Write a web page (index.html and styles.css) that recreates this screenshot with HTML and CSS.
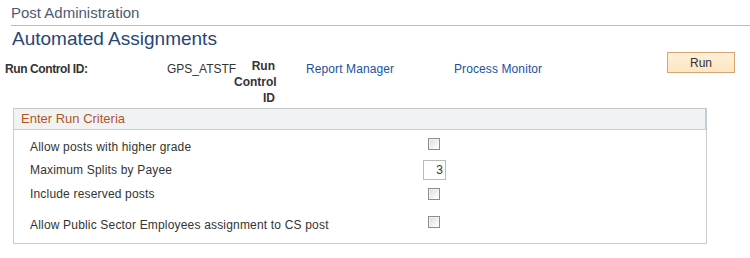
FILE: index.html
```html
<!DOCTYPE html>
<html lang="en">

<head>
    <meta charset="UTF-8">
    <meta name="viewport" content="width=device-width, initial-scale=1.0">
    <title>Automated Assignments</title>
    <link rel="stylesheet" href="styles.css">
</head>

<body>
    <div class="crumb">Post Administration</div>
    <h1 class="title">Automated Assignments</h1>

    <div class="runbar">
        <span class="rc-label">Run Control ID:</span>
        <span class="rc-value">GPS_ATSTF</span>
        <span class="rc-stack">Run<br>Control<br>ID</span>
        <a class="link link-rm" href="#">Report Manager</a>
        <a class="link link-pm" href="#">Process Monitor</a>
        <button class="run-btn" type="button">Run</button>
    </div>

    <div class="group">
        <div class="group-head">Enter Run Criteria</div>
        <div class="crit">
            <div class="row row-1">
                <span class="crit-label">Allow posts with higher grade</span>
                <input class="cb cb-up" type="checkbox">
            </div>
            <div class="row row-2">
                <span class="crit-label">Maximum Splits by Payee</span>
                <input class="num" type="text" value="3">
            </div>
            <div class="row row-3">
                <span class="crit-label">Include reserved posts</span>
                <input class="cb" type="checkbox">
            </div>
            <div class="row row-4">
                <span class="crit-label">Allow Public Sector Employees assignment to CS post</span>
                <input class="cb cb-up" type="checkbox">
            </div>
        </div>
    </div>
</body>

</html>
```

FILE: styles.css
```css
body {
    margin: 0;
    font-family: "Liberation Sans", Arial, sans-serif;
    font-size: 12px;
    color: #333;
    background: #fff;
}
.crumb {
    margin-left: 11px;
    height: 25px;
    line-height: 26px;
    font-size: 15px;
    color: #4b5a75;
    border-bottom: 1px solid #bdbdbd;
}
.title {
    margin: 0 0 0 12px;
    height: 25px;
    line-height: 25px;
    font-size: 19px;
    font-weight: normal;
    color: #284677;
}
.runbar {
    display: flex;
    align-items: flex-start;
    padding-left: 5px;
    margin-top: 1px;
    height: 56px;
}
.rc-label {
    width: 162px;
    padding-top: 9px;
    line-height: 16px;
    font-weight: bold;
    letter-spacing: -0.4px;
}
.rc-value {
    width: 67px;
    padding-top: 9px;
    line-height: 16px;
}
.rc-stack {
    width: 41px;
    padding-top: 6px;
    line-height: 16px;
    font-weight: bold;
    text-align: right;
}
.link {
    padding-top: 9px;
    line-height: 16px;
    color: #2150a2;
    text-decoration: none;
    letter-spacing: 0.1px;
}
.link-rm {
    margin-left: 31px;
    width: 148px;
}
.link-pm {
    width: 213px;
}
.run-btn {
    width: 68px;
    height: 21px;
    padding: 0;
    border: 1px solid #d6a670;
    background: linear-gradient(#fdf0d9, #fde6c3);
    font-family: inherit;
    font-size: 12px;
    color: #333;
    cursor: pointer;
}
.group {
    margin: 0 0 0 13px;
    width: 694px;
    box-sizing: border-box;
    border: 1px solid #c9cdd2;
    border-top-color: #c3c8cd;
}
.group-head {
    height: 20px;
    line-height: 20px;
    padding-left: 7px;
    font-size: 13px;
    color: #b5531f;
    background: #f0f3f4;
    border-bottom: 1px solid #c9cdd2;
    border-right: 2px solid #c6cad2;
    margin-right: -1px;
}
.crit {
    padding: 5px 0 6px 16px;
}
.row {
    display: flex;
    align-items: center;
}
.row-1 {
    height: 24px;
}
.row-2 {
    height: 22px;
}
.row-3 {
    height: 26px;
}
.row-4 {
    height: 24px;
    margin-top: 6px;
}
.crit-label {
    width: 393px;
    line-height: 16px;
    letter-spacing: 0.18px;
}
.cb {
    appearance: none;
    -webkit-appearance: none;
    width: 12px;
    height: 12px;
    margin: 0 0 0 5px;
    box-sizing: border-box;
    border: 1px solid #8e8e8e;
    background: linear-gradient(135deg, #d9dadd, #f7f7f8 70%, #ffffff);
    box-shadow: inset 1px 1px 0 #f2f2f2;
}
.cb-up {
    margin-bottom: 6px;
}
.num {
    width: 23px;
    height: 20px;
    box-sizing: border-box;
    margin: 0;
    padding: 0 2px 0 0;
    border: 1px solid #bababa;
    text-align: right;
    font-family: inherit;
    font-size: 12px;
    color: #333;
}
```
